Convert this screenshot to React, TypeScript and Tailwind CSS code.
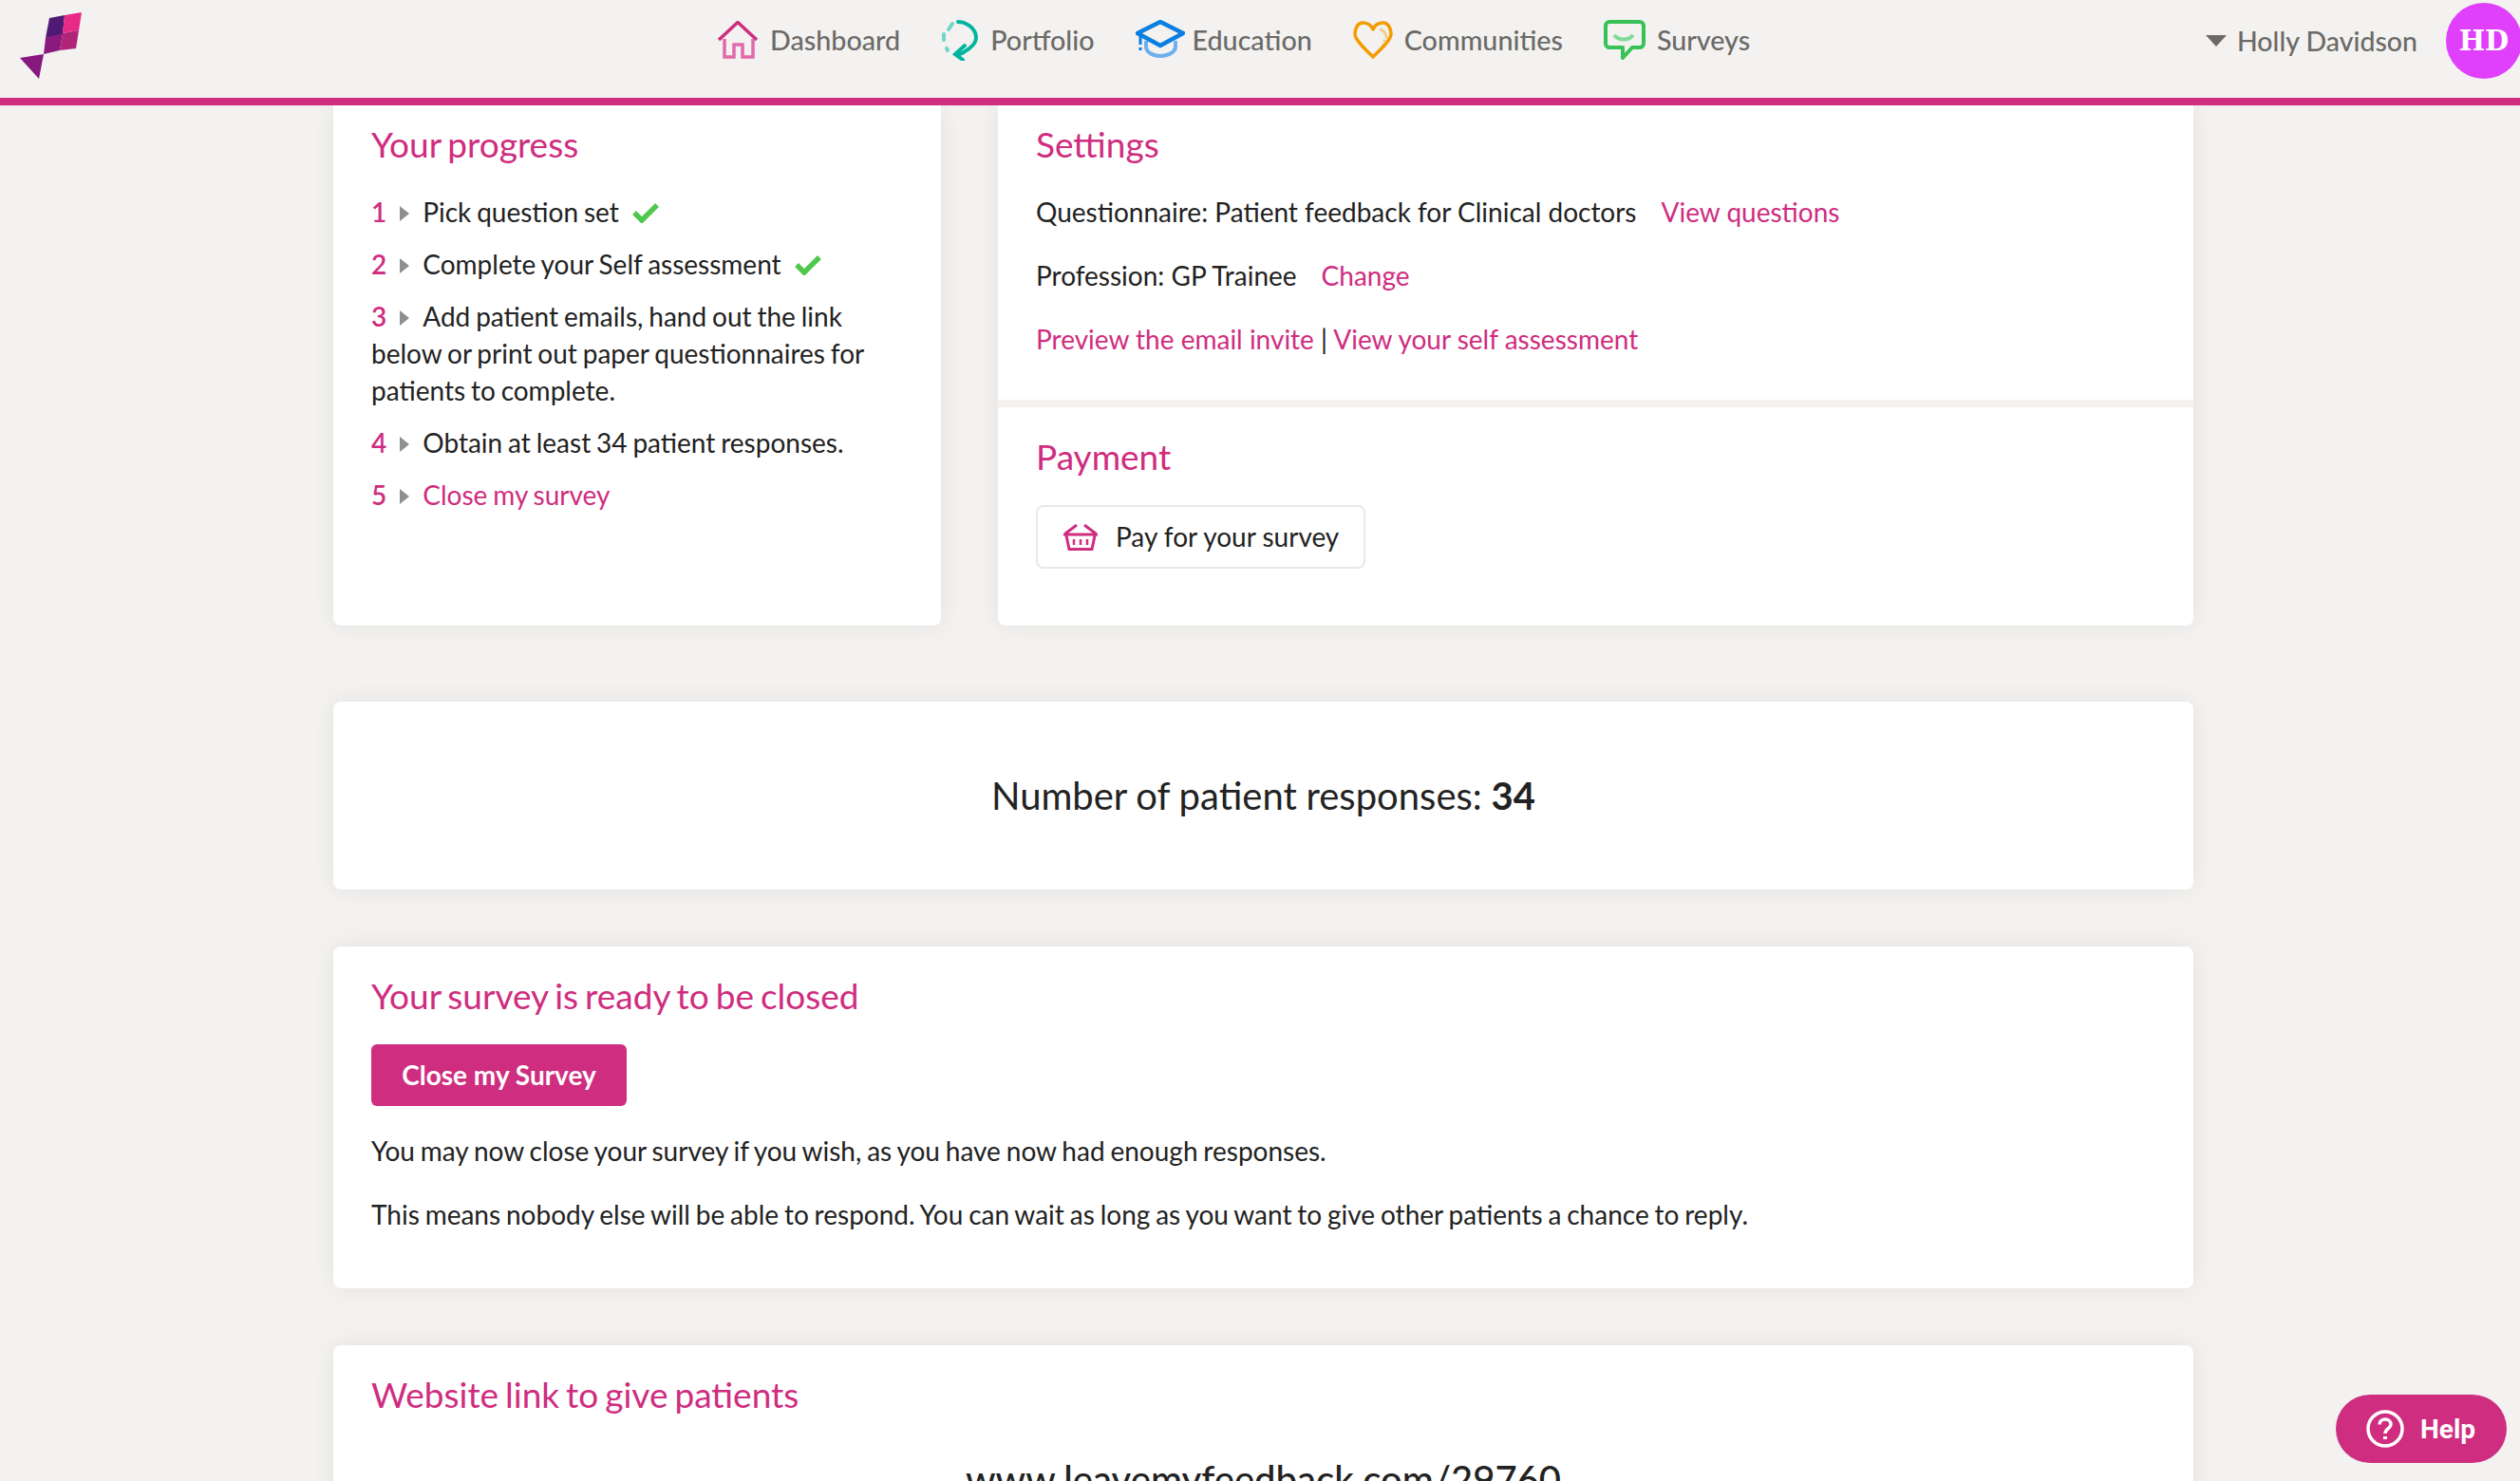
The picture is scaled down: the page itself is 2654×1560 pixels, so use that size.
const pink = "text-[#cf2d80]";

function Logo() {
  return (
    <svg viewBox="0 0 90 90" className="h-[90px] w-[90px] shrink-0">
      <polygon points="52,19 68,16 66,37 48,40" fill="#4f1a73" />
      <polygon points="68,16 86,13 83,32 66,35" fill="#e62a85" />
      <polygon points="48,40 66,35 63,53 46,57" fill="#8a1a7e" />
      <polygon points="66,35 83,32 80,51 63,53" fill="#b0247a" />
      <polygon points="21,61 46,57 41,83" fill="#86187e" />
    </svg>
  );
}

function HouseIcon() {
  return (
    <svg viewBox="0 0 44 40" className="h-[40px] w-[44px]" fill="none" strokeWidth="3.5">
      <path d="M2 20 22 1.500 42 20" stroke="#cf2d80" />
      <path d="M8 19V38H18V25H27V38H38V19" stroke="#e268aa" />
    </svg>
  );
}

function PortfolioIcon() {
  return (
    <svg viewBox="0 0 40 44" className="h-[44px] w-[40px]" fill="none" strokeLinecap="round">
      <path d="M18 3C27 3 37 10 37 20C37 27 30 32 20 37" stroke="#00b5a0" strokeWidth="4" />
      <path d="M25 28 15 37 23 43" stroke="#00b5a0" strokeWidth="4" />
      <path d="M12 5 8 11M3 16V22M6 31 7 33" stroke="#6fd6c8" strokeWidth="4" />
    </svg>
  );
}

function CapIcon() {
  return (
    <svg viewBox="0 0 52 42" className="-mr-[4px] h-[42px] w-[52px]" fill="none">
      <path d="M11 22V28C11 34 18 38 26 38C34 38 42 34 42 28V22" stroke="#6eb0ec" strokeWidth="4" />
      <path d="M26 2 50 14 26 27 2 14Z" stroke="#0a7fe0" strokeWidth="4.500" strokeLinejoin="round" />
      <path d="M5 16V26M5 29V32" stroke="#0a7fe0" strokeWidth="3" />
    </svg>
  );
}

function HeartIcon() {
  return (
    <svg viewBox="0 0 42 40" className="h-[40px] w-[42px]" fill="none" strokeLinecap="round">
      <path
        d="M21 9C19 4 14 2 10 2C5 2 2 8 2 14C2 20 14 31 21 38C28 31 40 20 40 14C40 8 37 2 32 2C27 2 23 4 21 9Z"
        stroke="#f49b00"
        strokeWidth="3.5"
        strokeLinejoin="round"
      />
      <path d="M29 9C33 11 35 14 35 17M33 21V22" stroke="#f3cd8d" strokeWidth="3" />
    </svg>
  );
}

function BubbleIcon() {
  return (
    <svg viewBox="0 0 44 42" className="h-[42px] w-[44px]" fill="none" strokeLinejoin="round">
      <path
        d="M6 2H38C40 2 42 4 42 6V25C42 27 40 29 38 29H30L20 40V29H6C4 29 2 27 2 25V6C2 4 4 2 6 2Z"
        stroke="#38c156"
        strokeWidth="4"
      />
      <path d="M11 16C16 22 26 22 31 16" stroke="#7fdc95" strokeWidth="4" />
    </svg>
  );
}

function BasketIcon() {
  return (
    <svg viewBox="0 0 36 28" className="h-[28px] w-[36px]" fill="none" stroke="#cf2d80" strokeWidth="3">
      <path d="M0 11H36M2 10 14 1M34 10 22 1" />
      <path d="M3 12 6 26.500H30L33 12" />
      <path d="M11 16V22M18 16V22M25 16V22" strokeWidth="2.500" />
    </svg>
  );
}

function Check() {
  return (
    <svg viewBox="0 0 28 21" className="ml-[14px] inline-block h-[21px] w-[28px] align-[-1px]" fill="none">
      <path d="M2 10 10 18 26 2" stroke="#4ec94e" strokeWidth="5.500" />
    </svg>
  );
}

function Arrow() {
  return <span className="mx-[14px] inline-block h-0 w-0 border-y-[8px] border-l-[10px] border-y-transparent border-l-[#8f8f8f] align-[1px]" />;
}

function NavItem({ icon, label }: { icon: React.ReactNode; label: string }) {
  return (
    <a className="flex items-center gap-[12px] text-[28.700px] font-medium text-[#6b6a68]">
      {icon}
      <span>{label}</span>
    </a>
  );
}

function Heading({ children }: { children: React.ReactNode }) {
  return <h2 className={`text-[37px] leading-[44px] [word-spacing:-2.500px] ${pink}`}>{children}</h2>;
}

const steps = [
  { n: 1, text: "Pick question set", done: true },
  { n: 2, text: "Complete your Self assessment", done: true },
  { n: 3, text: "Add patient emails, hand out the link below or print out paper questionnaires for patients to complete." },
  { n: 4, text: "Obtain at least 34 patient responses." },
  { n: 5, text: "Close my survey", link: true },
];

const card = "rounded-[8px] bg-white shadow-[0_0_24px_rgba(0,0,0,0.07)]";

export default function App() {
  return (
    <div className="relative h-[1560px] overflow-hidden bg-[#f3f2f0] font-['Lato',sans-serif] text-[28px] leading-[39px] text-[#222] [word-spacing:-1.300px]">
      <header className="relative z-10 flex h-[111px] items-start border-b-[8px] border-[#cf2d80] bg-[#f3f2f0] [word-spacing:0]">
        <Logo />
        <nav className="ml-[665px] mt-[20px] flex items-center gap-[43px]">
          <NavItem icon={<HouseIcon />} label="Dashboard" />
          <NavItem icon={<PortfolioIcon />} label="Portfolio" />
          <NavItem icon={<CapIcon />} label="Education" />
          <NavItem icon={<HeartIcon />} label="Communities" />
          <NavItem icon={<BubbleIcon />} label="Surveys" />
        </nav>
        <div className="ml-auto mt-[3px] flex items-center">
          <span className="mr-[11px] h-0 w-0 border-x-[11px] border-t-[12px] border-x-transparent border-t-[#6b6a68]" />
          <span className="text-[28.500px] font-medium text-[#6b6a68]">Holly Davidson</span>
          <span className="ml-[30px] mr-[-2px] flex h-[80px] w-[80px] items-center justify-center rounded-full bg-[#e040fb] font-['DejaVu_Serif',serif] text-[29px] font-bold text-white">
            HD
          </span>
        </div>
      </header>

      <main className="ml-[351px] w-[1959px]">
        <div className="grid grid-cols-[640px_1259px] gap-[60px]">
          <section className={`h-[548px] rounded-t-none px-[40px] pt-[19px] ${card}`}>
            <Heading>Your progress</Heading>
            <ol className="mt-[30px]">
              {steps.map((s) => (
                <li key={s.n} className="mb-[16px]">
                  <span className={`font-semibold ${pink}`}>{s.n}</span>
                  <Arrow />
                  {s.link ? <a className={pink}>{s.text}</a> : s.text}
                  {s.done && <Check />}
                </li>
              ))}
            </ol>
          </section>

          <section className={`rounded-t-none ${card}`}>
            <div className="h-[318px] border-b-[8px] border-[#f3f2f0] px-[40px] pt-[19px] [word-spacing:0]">
              <Heading>Settings</Heading>
              <p className="mt-[30px]">
                Questionnaire: Patient feedback for Clinical doctors
                <a className={`ml-[26px] ${pink}`}>View questions</a>
              </p>
              <p className="mt-[28px]">
                Profession: GP Trainee
                <a className={`ml-[26px] ${pink}`}>Change</a>
              </p>
              <p className="mt-[28px]">
                <a className={pink}>Preview the email invite</a> | <a className={pink}>View your self assessment</a>
              </p>
            </div>
            <div className="px-[40px] pt-[30px]">
              <Heading>Payment</Heading>
              <button className="mt-[29px] flex h-[67px] w-[347px] items-center gap-[19px] rounded-[8px] border-2 border-[#e8e8e8] pl-[27px]">
                <BasketIcon />
                <span>Pay for your survey</span>
              </button>
            </div>
          </section>
        </div>

        <section className={`mt-[80px] flex h-[198px] items-center justify-center text-[40px] [word-spacing:-0.500px] ${card}`}>
          <p>
            Number of patient responses: <span className="font-bold">34</span>
          </p>
        </section>

        <section className={`mt-[60px] h-[360px] px-[40px] pt-[30px] ${card}`}>
          <Heading>Your survey is ready to be closed</Heading>
          <button className="mt-[29px] h-[65px] w-[269px] rounded-[6px] bg-[#cf2d80] font-bold text-white">Close my Survey</button>
          <p className="mt-[28px]">You may now close your survey if you wish, as you have now had enough responses.</p>
          <p className="mt-[28px]">This means nobody else will be able to respond. You can wait as long as you want to give other patients a chance to reply.</p>
        </section>

        <section className={`mt-[60px] h-[400px] px-[40px] pt-[30px] ${card}`}>
          <Heading>Website link to give patients</Heading>
          <p className="mt-[48px] text-center text-[40px] font-medium">www.leavemyfeedback.com/29760</p>
        </section>
      </main>

      <button className="absolute left-[2460px] top-[1469px] flex h-[72px] w-[180px] items-center gap-[17px] rounded-full bg-[#cf2d80] pl-[32px] font-['Roboto',sans-serif] text-[28px] font-bold text-white">
        <svg viewBox="0 0 40 40" className="h-[40px] w-[40px]" fill="none" stroke="white" strokeWidth="3.5">
          <circle cx="20" cy="20" r="18" />
          <path d="M14 15.500C14 12 17 10 20 10C23.500 10 26 12.500 26 15.500C26 19.500 20 20 20 25" />
          <path d="M20 28V31" strokeWidth="4" />
        </svg>
        Help
      </button>
    </div>
  );
}
